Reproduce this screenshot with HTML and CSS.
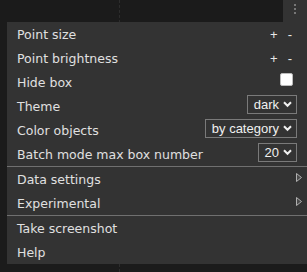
FILE: index.html
```html
<!DOCTYPE html>
<html>
<head>
<meta charset="utf-8">
<link rel="stylesheet" href="styles.css">
</head>
<body>
<div class="canvas">
  <div class="guide"></div>
</div>
<div class="menu-btn" aria-label="menu">
  <span class="dot"></span><span class="dot"></span><span class="dot"></span>
</div>
<div class="menu">
  <div class="row"><span class="label">Point size</span><span class="pm"><span class="plus">+</span><span class="minus">-</span></span></div>
  <div class="row"><span class="label">Point brightness</span><span class="pm"><span class="plus">+</span><span class="minus">-</span></span></div>
  <div class="row"><span class="label">Hide box</span><span class="check"></span></div>
  <div class="row"><span class="label">Theme</span>
    <span class="select"><span>dark</span><svg class="chev" width="9" height="7" viewBox="0 0 9 7"><path d="M1 1.2 L4.5 4.8 L8 1.2" fill="none" stroke="#f0f0f0" stroke-width="2"/></svg></span></div>
  <div class="row"><span class="label">Color objects</span>
    <span class="select"><span>by category</span><svg class="chev" width="9" height="7" viewBox="0 0 9 7"><path d="M1 1.2 L4.5 4.8 L8 1.2" fill="none" stroke="#f0f0f0" stroke-width="2"/></svg></span></div>
  <div class="row"><span class="label">Batch mode max box number</span>
    <span class="select"><span>20</span><svg class="chev" width="9" height="7" viewBox="0 0 9 7"><path d="M1 1.2 L4.5 4.8 L8 1.2" fill="none" stroke="#f0f0f0" stroke-width="2"/></svg></span></div>
  <div class="sep"></div>
  <div class="row"><span class="label">Data settings</span><svg class="tri" width="6" height="9" viewBox="0 0 6 9"><polygon points="0.5,0.5 5.5,4.5 0.5,8.5" fill="#4a4a4a" stroke="#b0b0b0" stroke-width="1"/></svg></div>
  <div class="row"><span class="label">Experimental</span><svg class="tri" width="6" height="9" viewBox="0 0 6 9"><polygon points="0.5,0.5 5.5,4.5 0.5,8.5" fill="#4a4a4a" stroke="#b0b0b0" stroke-width="1"/></svg></div>
  <div class="sep"></div>
  <div class="row"><span class="label">Take screenshot</span></div>
  <div class="row"><span class="label">Help</span></div>
</div>
</body>
</html>
```
FILE: styles.css
```css
html, body {
  margin: 0;
  padding: 0;
  width: 307px;
  height: 272px;
  overflow: hidden;
  background: #1b1b1b;
}
.canvas {
  height: 272px;
  display: flex;
}
.guide {
  margin-left: 119px;
  width: 0;
  height: 100%;
  border-left: 1px dashed #2d2d2d;
}
.menu-btn {
  position: absolute;
  top: 0;
  right: 0;
  width: 24px;
  height: 22px;
  background: #333;
  display: flex;
  flex-direction: column;
  align-items: center;
  padding-top: 4px;
  box-sizing: border-box;
  gap: 2px;
}
.dot {
  width: 2px;
  height: 2px;
  background: #777;
  margin-left: -1px;
}
.menu {
  position: absolute;
  top: 22px;
  left: 7px;
  right: 0;
  background: #333;
  display: flex;
  flex-direction: column;
  font-family: "DejaVu Sans", sans-serif;
  font-size: 12.5px;
  color: #e0e0e0;
}
.row {
  height: 24px;
  display: flex;
  align-items: center;
  justify-content: space-between;
  padding: 0 10px;
}
.label {
  white-space: nowrap;
}
.sep {
  height: 1px;
  background: #707070;
}
.pm {
  display: flex;
  font-family: "Liberation Sans", Arial, sans-serif;
  font-size: 13px;
  color: #e8e8e8;
  margin-right: 5px;
}
.plus {
  margin-right: 10px;
}
.check {
  width: 11px;
  height: 11px;
  background: #fff;
  border: 1px solid #bbb;
  border-radius: 2px;
  margin-right: 4px;
  margin-top: -5px;
}
.select {
  height: 19px;
  box-sizing: border-box;
  border: 1px solid #7a7a7a;
  display: flex;
  align-items: center;
  gap: 4px;
  padding: 0 4px 0 6px;
  font-family: "Liberation Sans", Arial, sans-serif;
  font-size: 13px;
  color: #f0f0f0;
  margin-top: -4px;
}
.chev {
  display: block;
}
.tri {
  display: block;
  margin-right: -5px;
  margin-top: -4px;
}
```
